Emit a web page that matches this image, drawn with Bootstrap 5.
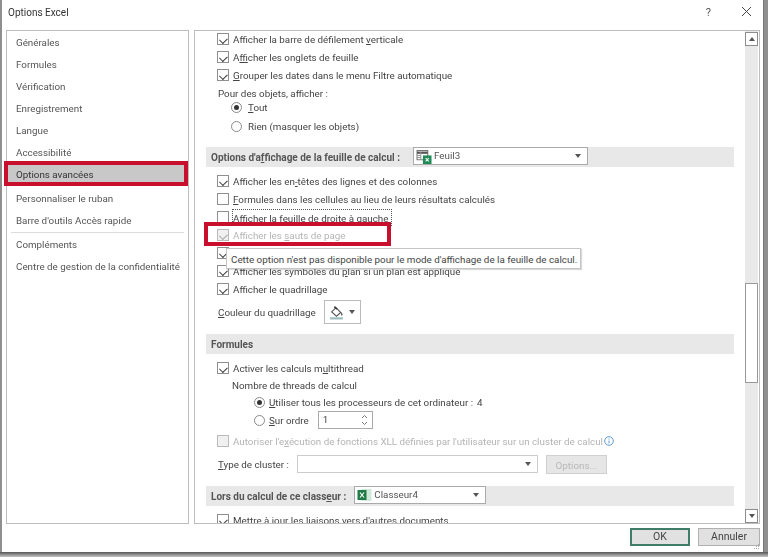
<!DOCTYPE html>
<html lang="fr"><head><meta charset="utf-8"><title>Options Excel</title>
<link href="https://cdn.jsdelivr.net/npm/bootstrap@5.3.0/dist/css/bootstrap.min.css" rel="stylesheet">
<style>
html,body{width:768px;height:557px;overflow:hidden;margin:0}
body{background:#8f8f8f;font-family:Roboto,sans-serif;font-size:9.800px;line-height:14px;color:#444;position:relative}
.xl-win{width:762px;height:552px;margin-left:2px;background:#fff;border-right:1px solid #777;position:relative;filter:blur(.35px)}
.xl-title{height:30px;padding:6px 11px 0 6px;color:#333;font-size:10px}
.xl-help{font-size:11px;margin-right:30px;color:#555}
.xl-main{gap:5px;height:494px;padding:0 3px 0 4px}
.xl-side{width:183px;border:1px solid #bdbdbd;flex:none;border-radius:0;display:block}
.xl-nav{height:22px;line-height:24px;padding-left:9px;color:#555;white-space:nowrap}
.xl-on{background:#c8c8c8;color:#333;margin-right:3px;height:22px}
.xl-gap{margin-top:2px}
.xl-sep{height:1px;background:#ddd;margin:1px 4px 0}
.xl-pane{flex:1;border:1px solid #bdbdbd;overflow:hidden;position:relative}
.xl-list{padding-left:11px;margin:-1px 25px 0 0}
.xl-row{height:18px;padding-left:11px;gap:4px;white-space:nowrap;align-items:center;display:flex}
.xl-row.xl-txt{padding-left:12px}
.xl-row.xl-r2{padding-left:25px}
.xl-row.xl-t2{padding-left:26px}
.xl-row.xl-r3{padding-left:48px}
.xl-lab{padding-top:2px}
.xl-box{width:12px;height:12px;border:1px solid #8f8f8f;background:#fff;flex:none;position:relative}
.xl-ck::after{content:"";position:absolute;left:3px;top:1.500px;width:4.500px;height:7px;border:solid #444;border-width:0 1.200px 1.200px 0;transform:rotate(45deg) scaleX(1.100)}
.xl-off{color:#b4b4b4}
.xl-off .xl-box{border-color:#bbb;background:#f0f0f0}
.xl-off .xl-ck::after{border-color:#aaa}
.xl-rad{width:11px;height:11px;border-radius:50%;border:1px solid #8a8a8a;flex:none;background:#fff;display:flex;align-items:center;justify-content:center}
.xl-r2 .xl-rad{margin-right:2px}
.xl-rad i{width:5px;height:5px;background:#333;border-radius:50%}
.xl-head{height:20px;background:#e8e8e8;font-weight:700;color:#555;padding:2px 0 0 5px;white-space:nowrap;display:flex;align-items:center;font-size:10px}
.xl-combo{height:18px;border:1px solid #aaa;background:#fff;color:#555;font-weight:400;padding:0 6px 0 2px;gap:2px;display:flex;align-items:center;flex:none;align-self:flex-start;margin-top:-2px;font-size:9.800px}
.xl-c1{width:175px;margin-left:13px}
.xl-c2{width:132px;margin-left:8px}
.xl-c3{width:241px;margin:0 0 0 4px;border-color:#ccc;justify-content:flex-end;align-self:center}
.xl-tri{width:0;height:0;border-left:3.500px solid transparent;border-right:3.500px solid transparent;border-top:4px solid #555;flex:none}
.xl-scroll{position:absolute;top:0;right:0;bottom:0;width:13px;background:#e9e9e9;margin-right:1px}
.xl-sbtn{height:14px;background:#fff;border:1px solid #8c8c8c;display:flex;align-items:center;justify-content:center;position:absolute;left:0;right:0}
.xl-sup{top:1px}.xl-sdn{bottom:0}
.xl-up{width:0;height:0;border-left:3.500px solid transparent;border-right:3.500px solid transparent;border-bottom:4px solid #555}
.xl-thumb{position:absolute;left:0;right:0;top:252px;height:100px;background:#fff;border:1px solid #999}
.xl-foot{height:28px;padding:4px 3px 0 0;gap:8px;position:relative}
.xl-btn{width:62px;height:18px;padding:0;border:1px solid #b0b0b0;background:#e1e1e1;color:#444;font-size:10.500px;line-height:16px;border-radius:0}
.xl-ok{width:60px;border:2px solid #3f7d68;line-height:14px}
.xl-grip{position:absolute;right:3px;bottom:1px}
.xl-mark{position:absolute;border:4px solid #c8102e}
.xl-m1{left:4px;top:161px;width:184px;height:25px}
.xl-m2{left:204px;top:222px;width:187px;height:24px}
.xl-tip{position:absolute;left:226px;top:248px;width:355px;height:21px;line-height:21px;background:#fff;border:1px solid #c4c4c4;padding-left:4px;color:#444;white-space:nowrap;box-shadow:1px 1px 1px rgba(0,0,0,.15)}
.xl-dash{outline:1px dotted #555;outline-offset:0;width:158px;height:15px}
.xl-spin{width:55px;height:18px;border:1px solid #aaa;background:#fff;margin-left:5px;padding:0 4px;display:flex;align-items:center;justify-content:space-between}
.xl-cbtn{width:37px;height:24px;border:1px solid #bbb;gap:5px;margin-left:4px;display:flex;align-items:center;justify-content:center}
.xl-opt{width:61px;height:19px;background:#e6e6e6;border:1px solid #d0d0d0;color:#b8b8b8;margin-left:4px;text-align:center;line-height:19px}
.xl-shadow{height:5px;background:linear-gradient(#555,#c4c4c4)}
.m-n4{margin-top:-4px}.m-n1{margin-top:-1px}.m-1p{margin-top:1px}.m-2p{margin-top:2px}.m-3p{margin-top:3px}.m-5p{margin-top:5px}.m-10p{margin-top:10px}.m-12p{margin-top:12px}.m-13p{margin-top:13px}
.xl-tall{height:24px}
.xl-info{margin-left:-3px}
</style></head><body>
<div class="xl-win d-flex flex-column">
  <div class="xl-title d-flex align-items-start">
    <span class="flex-grow-1">Options Excel</span>
    <span class="xl-help">?</span>
    <svg width="11" height="11" viewBox="0 0 11 11"><path d="M1 1l9 9M10 1l-9 9" stroke="#444" fill="none"/></svg>
  </div>
  <div class="xl-main d-flex">
    <div class="xl-side list-group">
      <div class="xl-nav">Générales</div>
      <div class="xl-nav">Formules</div>
      <div class="xl-nav">Vérification</div>
      <div class="xl-nav">Enregistrement</div>
      <div class="xl-nav">Langue</div>
      <div class="xl-nav">Accessibilité</div>
      <div class="xl-nav xl-on">Options avancées</div>
      <div class="xl-nav xl-gap">Personnaliser le ruban</div>
      <div class="xl-nav">Barre d'outils Accès rapide</div>
      <div class="xl-sep"></div>
      <div class="xl-nav">Compléments</div>
      <div class="xl-nav">Centre de gestion de la confidentialité</div>
    </div>
    <div class="xl-pane">
      <div class="xl-list">
        <div class="xl-row"><span class="xl-box xl-ck"></span><span class="xl-lab">Afficher la barre de défilement <u>v</u>erticale</span></div>
        <div class="xl-row"><span class="xl-box xl-ck"></span><span class="xl-lab">A<u>f</u>ficher les onglets de feuille</span></div>
        <div class="xl-row"><span class="xl-box xl-ck"></span><span class="xl-lab"><u>G</u>rouper les dates dans le menu Filtre automatique</span></div>
        <div class="xl-row xl-txt"><span class="xl-lab">Pour des objets, afficher :</span></div>
        <div class="xl-row xl-r2 m-n4"><span class="xl-rad"><i></i></span><span class="xl-lab"><u>T</u>out</span></div>
        <div class="xl-row xl-r2 m-1p"><span class="xl-rad"></span><span class="xl-lab">Rien (masquer les objets)</span></div>
        <div class="xl-head m-12p">Options d'a<u>f</u>fichage de la feuille de calcul :
          <span class="xl-combo xl-c1"><svg width="16" height="15" viewBox="0 0 14 14"><path d="M.5 1.500h10v8.500h-10z" fill="#fff" stroke="#777"/><path d="M.5 3.500h10" stroke="#555" stroke-width="2"/><path d="M.5 6h4M.5 8h4M4 3v7" stroke="#999"/><rect x="6" y="6" width="8" height="8" fill="#1f8a55"/><path d="M8.500 8.500l3 3M11.500 8.500l-3 3" stroke="#fff"/></svg><span class="flex-grow-1">Feuil3</span><span class="xl-tri"></span></span>
        </div>
        <div class="xl-row m-5p"><span class="xl-box xl-ck"></span><span class="xl-lab">Afficher les en<u>-</u>têtes des lignes et des colonnes</span></div>
        <div class="xl-row"><span class="xl-box"></span><span class="xl-lab"><u>F</u>ormules dans les cellules au lieu de leurs résultats calculés</span></div>
        <div class="xl-row"><span class="xl-box"></span><span class="xl-lab xl-dash">Afficher la feuille de droite à gauche</span></div>
        <div class="xl-row xl-off"><span class="xl-box xl-ck"></span><span class="xl-lab">Afficher les <u>s</u>auts de page</span></div>
        <div class="xl-row"><span class="xl-box xl-ck"></span></div>
        <div class="xl-row"><span class="xl-box xl-ck"></span><span class="xl-lab">Afficher les symboles du <u>p</u>lan si un plan est appliqué</span></div>
        <div class="xl-row"><span class="xl-box xl-ck"></span><span class="xl-lab">Afficher le quadrillage</span></div>
        <div class="xl-row xl-txt xl-tall m-2p"><span class="xl-lab"><u>C</u>ouleur du quadrillage</span>
          <span class="xl-cbtn"><svg width="15" height="15" viewBox="0 0 14 14"><path d="M2.500 6.500l4-4 4.500 4.500-4 3.500z" fill="#fff" stroke="#555"/><path d="M5 1.500l2.500 2.500" stroke="#333" stroke-width="1.400"/><path d="M11.500 6.500c1 1.500 1.500 2 1 3-.5.500-1 .5-1.300 0-.2-1 0-2 .3-3z" fill="#666"/><path d="M1 12.500h12" stroke="#9bb" stroke-width="2"/></svg><span class="xl-tri"></span></span>
        </div>
        <div class="xl-head m-10p">Formules</div>
        <div class="xl-row m-5p"><span class="xl-box xl-ck"></span><span class="xl-lab">Activer les calculs m<u>u</u>ltithread</span></div>
        <div class="xl-row xl-t2 m-n1"><span class="xl-lab">Nombre de threads de calcul</span></div>
        <div class="xl-row xl-r3 m-n1"><span class="xl-rad"><i></i></span><span class="xl-lab"><u>U</u>tiliser tous les processeurs de cet ordinateur :</span><span class="xl-lab">4</span></div>
        <div class="xl-row xl-r3"><span class="xl-rad"></span><span class="xl-lab"><u>S</u>ur ordre</span>
          <span class="xl-spin"><span>1</span><svg width="7" height="12" viewBox="0 0 7 12"><path d="M1 4l2.500-2.500L6 4M1 8l2.500 2.500L6 8" fill="none" stroke="#777"/></svg></span></div>
        <div class="xl-row xl-off m-3p"><span class="xl-box"></span><span class="xl-lab">Autoriser l'e<u>x</u>écution de fonctions XLL définies par l'utilisateur sur un cluster de calcul</span>
          <svg class="xl-info" width="10" height="10" viewBox="0 0 10 10"><circle cx="5" cy="5" r="4.300" fill="#fff" stroke="#5b9bd5"/><path d="M5 4.500v3M5 2.500v1" stroke="#5b9bd5"/></svg></div>
        <div class="xl-row xl-txt m-5p"><span class="xl-lab"><u>T</u>ype de cluster :</span><span class="xl-combo xl-c3"><span class="xl-tri"></span></span><span class="xl-opt">Options...</span></div>
        <div class="xl-head m-13p">Lors du calcul de ce class<u>e</u>ur :
          <span class="xl-combo xl-c2"><svg width="15" height="14" viewBox="0 0 14 14"><rect x="4" y="1" width="10" height="12" fill="#cfe8d8"/><rect x="0" y="2" width="9" height="10" fill="#1f7a45"/><path d="M2.500 4.500l4 5M6.500 4.500l-4 5" stroke="#fff" stroke-width="1.200"/></svg><span class="flex-grow-1">Classeur4</span><span class="xl-tri"></span></span>
        </div>
        <div class="xl-row m-5p"><span class="xl-box xl-ck"></span><span class="xl-lab">Mettre à jour les liaisons vers d'autres documents</span></div>
      </div>
      <div class="xl-scroll">
        <div class="xl-sbtn xl-sup"><span class="xl-up"></span></div>
        <div class="xl-thumb"></div>
        <div class="xl-sbtn xl-sdn"><span class="xl-tri"></span></div>
      </div>
    </div>
  </div>
  <div class="xl-foot d-flex justify-content-end">
    <button class="btn xl-btn xl-ok">OK</button>
    <button class="btn xl-btn">Annuler</button>
    <svg class="xl-grip" width="8" height="8" viewBox="0 0 8 8"><path d="M6 1h1v1H6zM4 3h1v1H4zM6 3h1v1H6zM2 5h1v1H2zM4 5h1v1H4zM6 5h1v1H6z" fill="#aaa"/></svg>
  </div>
</div>
<div class="xl-shadow"></div>
<div class="xl-mark xl-m1"></div>
<div class="xl-mark xl-m2"></div>
<div class="xl-tip">Cette option n'est pas disponible pour le mode d'affichage de la feuille de calcul.</div>
</body></html>
